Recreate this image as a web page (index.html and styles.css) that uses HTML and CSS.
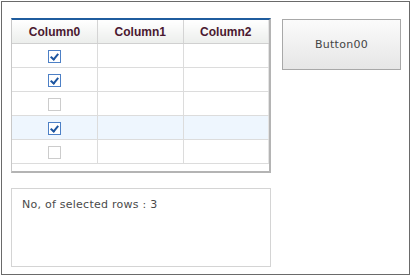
FILE: index.html
```html
<!DOCTYPE html>
<html lang="en">
<head>
    <meta charset="UTF-8">
    <title>Grid Demo</title>
    <link rel="stylesheet" href="styles.css">
</head>
<body>
    <div class="frame">
        <div class="left-col">
            <div class="grid">
                <table>
                    <thead>
                        <tr>
                            <th>Column0</th>
                            <th>Column1</th>
                            <th>Column2</th>
                        </tr>
                    </thead>
                    <tbody>
                        <tr><td><span class="check on"></span></td><td></td><td></td></tr>
                        <tr><td><span class="check on"></span></td><td></td><td></td></tr>
                        <tr><td><span class="check"></span></td><td></td><td></td></tr>
                        <tr class="selected"><td><span class="check on"></span></td><td></td><td></td></tr>
                        <tr><td><span class="check"></span></td><td></td><td></td></tr>
                    </tbody>
                </table>
            </div>
            <div class="output">No, of selected rows : 3</div>
        </div>
        <button class="btn">Button00</button>
    </div>
</body>
</html>
```

FILE: styles.css
```css
body {
    margin: 0;
    font-family: 'DejaVu Sans', sans-serif;
    background: #fff;
}
.frame {
    margin: 1px 0 0 1px;
    width: 409px;
    height: 274px;
    box-sizing: border-box;
    border: 1px solid #6a6a6a;
    padding: 16px 0 0 9px;
    display: flex;
    align-items: flex-start;
    gap: 11px;
}
.left-col {
    width: 260px;
    display: flex;
    flex-direction: column;
    gap: 15px;
}
.grid {
    height: 155px;
    box-sizing: border-box;
    border-top: 2px solid #1f5c9e;
    border-left: 1px solid #c8c8c8;
    border-right: 2px solid #b4b4b4;
    border-bottom: 2px solid #b4b4b4;
    background: #fff;
}
table {
    width: 100%;
    border-collapse: collapse;
    table-layout: fixed;
}
th {
    height: 23px;
    padding: 0;
    font-family: 'Liberation Sans', sans-serif;
    font-size: 12px;
    font-weight: bold;
    color: #4a1830;
    background: linear-gradient(#ffffff, #eceeec);
    border-right: 1px solid #d4d4d4;
    border-bottom: 1px solid #d0d0d0;
}
td {
    height: 23px;
    padding: 0;
    text-align: center;
    border-right: 1px solid #dcdcdc;
    border-bottom: 1px solid #dcdcdc;
}
th:last-child, td:last-child {
    border-right: 1px solid #e4e4e4;
}
tr.selected td {
    background: #eef6fe;
}
.check {
    display: inline-block;
    width: 11px;
    height: 11px;
    border: 1px solid #cccccc;
    background: #fff;
    vertical-align: middle;
    position: relative;
}
.check.on {
    border-color: #4d80c6;
}
.check.on::after {
    content: "";
    position: absolute;
    left: 3px;
    top: 1px;
    width: 3px;
    height: 6px;
    border-right: 2px solid #1d55a0;
    border-bottom: 2px solid #1d55a0;
    transform: rotate(40deg);
}
.output {
    height: 79px;
    box-sizing: border-box;
    border: 1px solid #d4d4d4;
    padding: 9px 10px;
    font-size: 11px;
    letter-spacing: 0.25px;
    color: #4a4a4a;
}
.btn {
    margin-top: 1px;
    width: 119px;
    height: 51px;
    border: 1px solid #a8a8a8;
    background: linear-gradient(#fbfbfb, #e6e6e6);
    font-family: 'DejaVu Sans', sans-serif;
    font-size: 11px;
    letter-spacing: 0.3px;
    color: #444;
    padding: 0;
}
```
